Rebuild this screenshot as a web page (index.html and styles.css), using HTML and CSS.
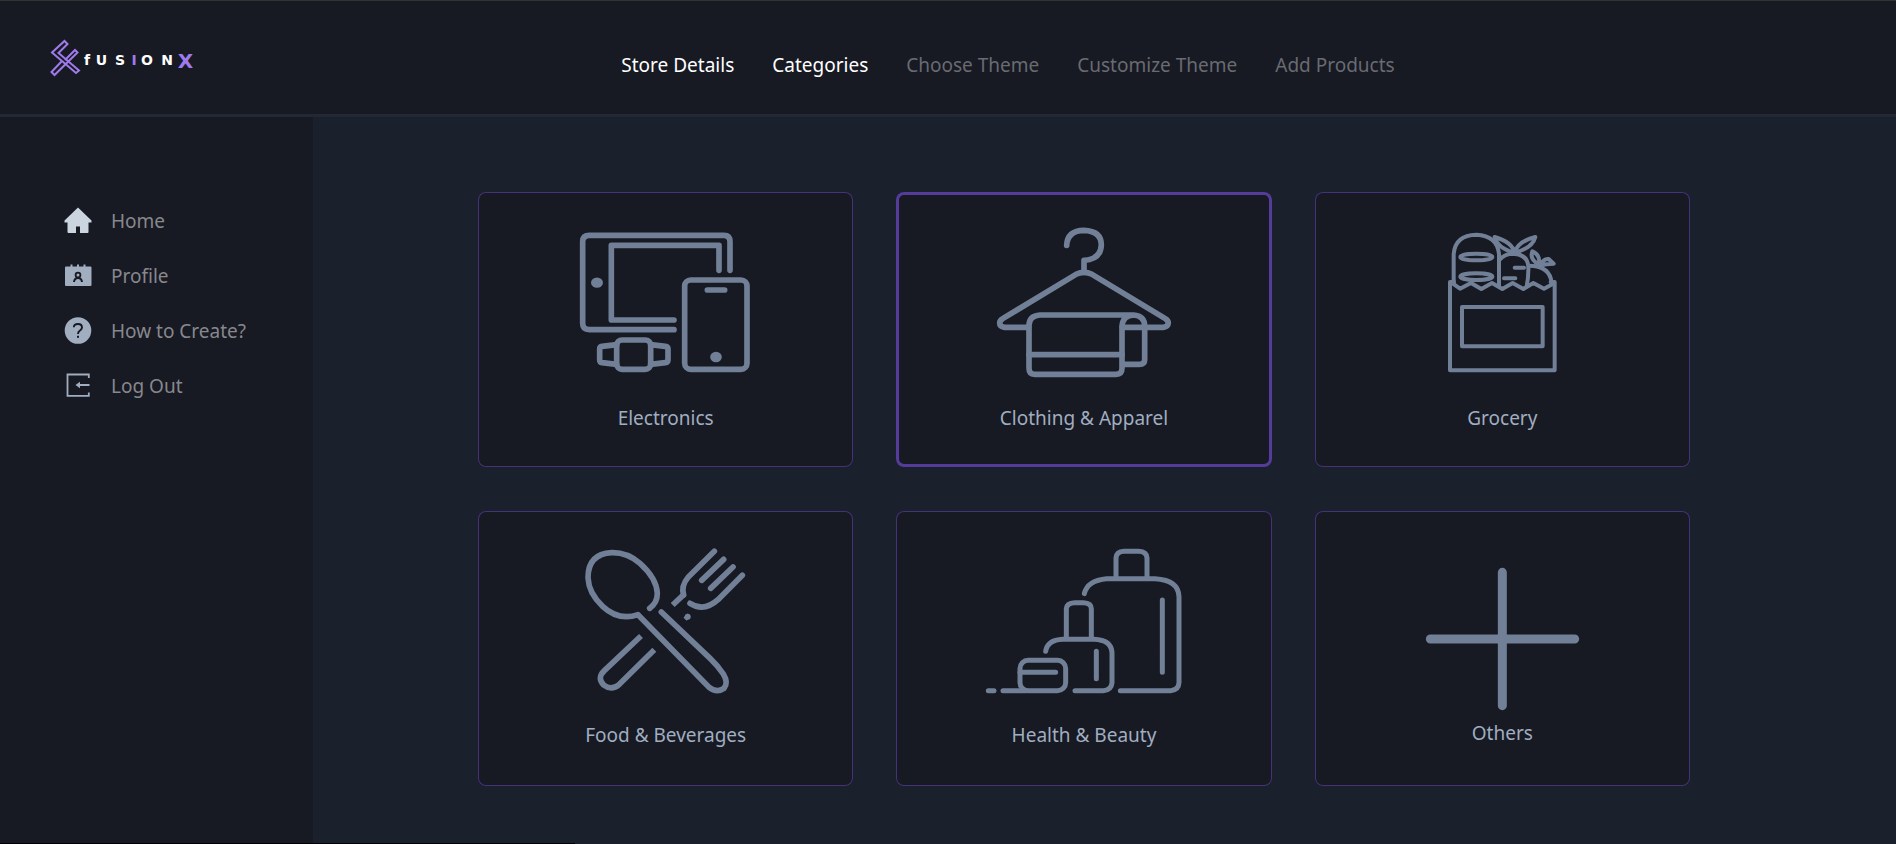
FILE: index.html
```html
<!DOCTYPE html>
<html lang="en">
<head>
<meta charset="utf-8">
<meta name="viewport" content="width=device-width, initial-scale=1">
<title>FusionX - Categories</title>
<link rel="stylesheet" href="styles.css">
</head>
<body class="page">
<header class="header">
  <a class="logo" href="#" aria-label="FusionX">
    <svg class="logo-art" viewBox="50 36 146 44">
      <g class="logo-mark">
        <path d="M64.500 41 L67.500 44 L58.500 53 L79 70.500 L76 73 L52 52.500Z"/>
        <path d="M65 60 L75 50 L77.500 52.500 L54.500 75 L51.500 72 L61.500 61.500"/>
      </g>
      <text class="logo-text" y="65" x="87 101.500 120 134 147 167"><tspan>fUS</tspan><tspan class="logo-accent">I</tspan><tspan>ON</tspan></text>
      <text class="logo-x" x="185.500" y="68">X</text>
    </svg>
  </a>
  <nav class="steps" aria-label="Setup steps">
    <a class="step step-done" href="#">Store Details</a>
    <a class="step step-done" href="#" aria-current="step">Categories</a>
    <a class="step" href="#">Choose Theme</a>
    <a class="step" href="#">Customize Theme</a>
    <a class="step" href="#">Add Products</a>
  </nav>
</header>
<div class="body">
  <aside class="sidebar">
    <nav class="menu" aria-label="Main">
      <a class="menu-item" href="#">
        <svg class="menu-icon" viewBox="0 0 28 28"><path fill="#cbd5e0" d="M14 .5 L27.500 13.500 V15.500 H24.500 V25 Q24.500 26 23.500 26 H16 V19.500 H12 V26 H4.500 Q3.500 26 3.500 25 V15.500 H.5 V13.500Z"/></svg>
        Home
      </a>
      <a class="menu-item" href="#">
        <svg class="menu-icon" viewBox="0 0 28 28"><path fill="#a0aec0" d="M2 4.500H6.500V2.500H8.500V4.500H13V2.500H15V4.500H19.500V2.500H21.500V4.500H26.500Q27.500 4.500 27.500 5.500V23Q27.500 24 26.500 24H2Q1 24 1 23V5.500Q1 4.500 2 4.500Z"/><circle cx="14" cy="13" r="2.400" fill="none" stroke="#171923" stroke-width="1.800"/><path d="M10 20Q10.500 16 14 16T18 20" fill="none" stroke="#171923" stroke-width="2"/></svg>
        Profile
      </a>
      <a class="menu-item" href="#">
        <svg class="menu-icon" viewBox="0 0 28 28"><circle cx="14" cy="13.500" r="13.300" fill="#a0aec0"/><path d="M9.800 10.300Q10 7 14 7Q18 7 18 10.500Q18 12.100 16 13.500Q14 14.800 14 17" fill="none" stroke="#171923" stroke-width="1.900"/><rect x="13" y="18.800" width="2" height="2" fill="#171923"/></svg>
        How to Create?
      </a>
      <a class="menu-item" href="#">
        <svg class="menu-icon" viewBox="0 0 28 28"><path d="M24.800 6V2.500H3.500V23.800H24.800V20.500" fill="none" stroke="#a0aec0" stroke-width="1.800"/><path d="M25.500 13H13" stroke="#a0aec0" stroke-width="2"/><path d="M11.500 13L16 9.800V16.200Z" fill="#a0aec0"/></svg>
        Log Out
      </a>
    </nav>
  </aside>
  <main class="main">
    <div class="grid">
      <button class="card" type="button" aria-pressed="false">
        <svg class="card-icon" viewBox="273 111 630 510">
          <g class="line">
            <path d="M780 256V170Q780 151 762 151H358Q338 151 338 170V415Q338 434 358 434H612"/>
            <path d="M747 256V181H424V405H612"/>
            <rect x="644" y="285" width="187" height="268" rx="18"/>
            <path d="M712 315H764"/>
            <rect x="440" y="465" width="102" height="88" rx="16"/>
            <path d="M440 479L396 484Q389 485 389 492V524Q389 532 396 533L440 538M542 479L586 484Q594 485 594 492V524Q594 532 586 533L542 538"/>
          </g>
          <ellipse class="dot" cx="381" cy="293" rx="18" ry="15.500"/><ellipse class="dot" cx="738" cy="516" rx="17.500" ry="15.500"/>
        </svg>
        <span class="card-label">Electronics</span>
      </button>
      <button class="card card-selected" type="button" aria-pressed="true">
        <svg class="card-icon" viewBox="267 111 630 510">
          <g class="line">
            <path d="M530 181Q532 137 582 136Q634 138 634 180Q632 223 582 226V262"/>
            <path d="M416 427H344Q329 425 329 414Q329 406 338 401L558 268Q582 256 606 268L826 401Q835 406 835 414Q834 425 820 427H697"/>
            <path d="M731 390H450Q417 392 417 422V550Q417 568 434 568H678Q696 568 696 550V424Q698 391 731 390Q764 392 764 424V524Q764 538 748 538H696"/>
            <path d="M417 509H696"/>
          </g>
        </svg>
        <span class="card-label">Clothing &amp; Apparel</span>
      </button>
      <button class="card" type="button" aria-pressed="false">
        <svg class="card-icon" viewBox="261 111 630 510">
          <g class="line line-fine">
            <path d="M432 291H420V556H734V291H722"/>
            <path d="M432 298L450 311L483 294L514 312L546 294L577 312L608 294L640 312L670 294L702 311L728 297"/>
            <rect x="456" y="366" width="242" height="118"/>
            <path d="M431 297V207Q436 150 499 149Q562 152 567 207V303"/>
            <ellipse cx="499" cy="216" rx="48" ry="10"/><ellipse cx="499" cy="275" rx="48" ry="10"/>
            <path d="M569 224Q584 206 610 206Q652 208 655 244Q656 276 650 304"/>
            <path d="M613 203Q608 172 554 156Q563 190 613 203ZM613 203Q667 190 676 156Q625 168 613 203Z"/>
            <path d="M614 248H642M582 280H616"/>
            <path d="M657 242Q720 242 725 294"/>
            <path d="M687 238Q692 210 667 199Q658 224 687 238ZM690 242Q700 220 716 222L731 236Q708 236 690 242Z"/>
          </g>
        </svg>
        <span class="card-label">Grocery</span>
      </button>
      <button class="card card-snug" type="button" aria-pressed="false">
        <svg class="card-icon" viewBox="273 123 630 510">
          <g class="line">
            <path d="M539 325Q562 309 562 280Q560 235 510 190Q472 157 425 158Q354 162 354 233Q356 280 398 319Q446 364 504 344L717 562Q740 580 762 565Q776 549 760 522Q744 498 721 476L574 336"/>
            <path d="M733 154L655 231Q632 258 641 285"/>
            <path d="M761 178L695 241M789 201L722 265M817 226L744 299Q702 337 660 310"/>
          </g>
          <g class="line line-flat">
            <path d="M642 283L608 315M513 408L403 512Q380 534 401 555Q425 573 448 553L553 449M646 347L656 356"/>
          </g>
          <circle class="dot" cx="653" cy="350" r="9"/>
        </svg>
        <span class="card-label">Food &amp; Beverages</span>
      </button>
      <button class="card card-snug" type="button" aria-pressed="false">
        <svg class="card-icon" viewBox="267 123 630 510">
          <g class="line line-medium">
            <path d="M678 232V174Q679 155 702 154H746Q770 155 771 174V232"/>
            <path d="M583 281Q592 241 650 236H795Q866 240 867 290V548Q866 570 842 572H691"/>
            <path d="M817 300V517M619 454V536"/>
            <path d="M529 413V326Q530 309 554 308H580Q604 309 604 326V413"/>
            <path d="M467 454Q472 420 518 418H612Q664 420 666 458V548Q664 570 640 572H555"/>
            <rect x="390" y="481" width="137" height="91" rx="24"/>
            <path d="M390 517H497M339 572H410M295 572H312"/>
          </g>
        </svg>
        <span class="card-label">Health &amp; Beauty</span>
      </button>
      <button class="card card-tight" type="button" aria-pressed="false">
        <svg class="card-icon" viewBox="261 123 630 510">
          <path class="line line-bold" d="M577 217V617M361 417H794"/>
        </svg>
        <span class="card-label">Others</span>
      </button>
    </div>
  </main>
</div>
<div class="progress"></div>
</body>
</html>
```
FILE: styles.css
```css
* { box-sizing: border-box; }

.page {
  margin: 0;
  min-height: 100vh;
  display: flex;
  flex-direction: column;
  background: #1a202c;
  font-family: "Segoe UI", "Noto Sans", sans-serif;
  font-size: 19px;
  line-height: 28px;
}

a { text-decoration: none; }

.header {
  display: grid;
  grid-template-columns: 1fr auto 1fr;
  align-items: center;
  height: 117px;
  padding: 0 0 0 50px;
  background: #171923;
  border-top: 1px solid #333333;
  border-bottom: 3px solid #232835;
}

.logo { display: block; width: 146px; height: 44px; }
.logo-art { display: block; width: 100%; height: 100%; }
.logo-mark { fill: none; stroke: #9f7aea; stroke-width: 2; }
.logo-text, .logo-x {
  font-family: "DejaVu Sans", sans-serif;
  font-weight: 700;
  font-size: 14px;
  text-anchor: middle;
  fill: #ffffff;
}
.logo-x { font-size: 20px; }
.logo-x, .logo-accent { fill: #9f7aea; }

.steps { display: flex; gap: 38px; padding: 14px 0 0 70px; }
.step { color: #696b71; }
.step-done { color: #ffffff; }

.body { flex: 1; display: flex; }

.sidebar {
  flex: none;
  width: 313px;
  padding: 90px 24px 24px 64px;
  background: #171923;
}
.menu { display: flex; flex-direction: column; gap: 27px; }
.menu-item {
  display: flex;
  align-items: center;
  gap: 19px;
  color: #87888d;
}
.menu-icon { flex: none; width: 28px; height: 28px; }

.main { flex: 1; padding: 75px 206px 57px 165px; }

.grid {
  display: grid;
  grid-template-columns: repeat(3, 1fr);
  gap: 44px 43px;
}

.card {
  display: flex;
  flex-direction: column;
  align-items: center;
  gap: 12px;
  min-height: 275px;
  padding: 30px 20px;
  border: 0;
  border-radius: 8px;
  background: #171923;
  box-shadow: inset 0 0 0 1px #44337a;
  color: #a0aec0;
  font: inherit;
  cursor: pointer;
}
.card-selected { box-shadow: inset 0 0 0 3px #553c9a; }
.card-snug { gap: 10px; }
.card-tight { gap: 8px; }

.card-icon { width: 210px; height: 170px; }
.line {
  fill: none;
  stroke: #718096;
  stroke-width: 17;
  stroke-linecap: round;
  stroke-linejoin: round;
}
.line-fine { stroke-width: 12; }
.line-medium { stroke-width: 15; }
.line-bold { stroke-width: 27; }
.line-flat { stroke-linecap: butt; }
.dot { fill: #718096; }

.progress {
  position: fixed;
  left: 0;
  bottom: 0;
  width: 575px;
  height: 1px;
  background: #000000;
}
```
